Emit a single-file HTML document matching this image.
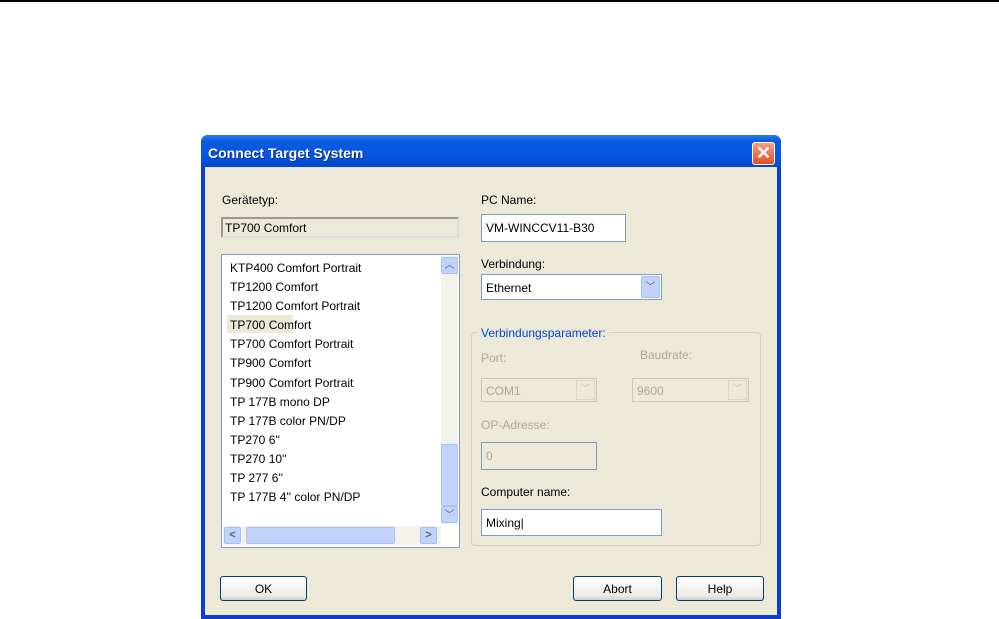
<!DOCTYPE html>
<html><head><meta charset="utf-8"><style>
body{margin:0;width:999px;height:619px;background:#fff;position:relative;overflow:hidden;font-family:"Liberation Sans",sans-serif;font-size:12px;color:#000}
.a{position:absolute}
.dlg{left:201px;top:135px;width:580px;height:484px;background:#0a3fd0;border-radius:7px 7px 0 0}
.title{left:201px;top:135px;width:580px;height:32px;border-radius:7px 7px 0 0;background:linear-gradient(#2b78f0,#0a5ae0 20%,#0555e0 70%,#0447c8)}
.tt{left:208px;top:145px;color:#fff;font-weight:bold;font-size:14px;text-shadow:1px 1px #0a2a80}
.body{left:205px;top:167px;width:572px;height:448px;background:#ece9d8}
.in{background:#fff;border:1px solid #7f9db9;box-sizing:border-box;padding:3px 0 0 4px}
.btn{border:1px solid #003c74;border-radius:3px;background:linear-gradient(#fff,#ecebe6 80%,#d6d0c5);box-sizing:border-box;text-align:center;padding-top:5px}
.sb{background:#c1d3fb;border:1px solid #a9c0ef;border-radius:2px;box-sizing:border-box}
.dis{color:#aca899}
</style></head><body>
<div class="a" style="left:0;top:0;width:999px;height:2px;background:#000"></div>
<div class="a dlg"></div>
<div class="a title"></div>
<div class="a tt">Connect Target System</div>
<div class="a" style="left:752px;top:142px;width:23px;height:23px;border:1px solid #fff;border-radius:3px;background:linear-gradient(#f0a080,#e0502a);box-sizing:border-box;color:#fff;font-size:18px;text-align:center;line-height:20px;font-weight:bold">✕</div>
<div class="a body"></div>

<div class="a" style="left:222px;top:193px">Gerätetyp:</div>
<div class="a" style="left:221px;top:217px;width:238px;height:21px;border:2px solid #9a9890;border-right-color:#ddd;border-bottom-color:#ddd;box-sizing:border-box;padding:2px 0 0 2px">TP700 Comfort</div>

<div class="a" style="left:221px;top:254px;width:239px;height:294px;background:#fff;border:1px solid #7f9db9;box-sizing:border-box"></div>
<div class="a" style="left:227px;top:315px;width:66px;height:18px;background:#ece9d8"></div>
<div class="a" style="left:230px;top:259px;line-height:19.1px">KTP400 Comfort Portrait<br>TP1200 Comfort<br>TP1200 Comfort Portrait<br>TP700 Comfort<br>TP700 Comfort Portrait<br>TP900 Comfort<br>TP900 Comfort Portrait<br>TP 177B mono DP<br>TP 177B color PN/DP<br>TP270 6''<br>TP270 10''<br>TP 277 6''<br>TP 177B 4'' color PN/DP</div>
<div class="a" style="left:441px;top:256px;width:17px;height:268px;background:#f3f1ec"></div>
<div class="a sb" style="left:441px;top:257px;width:17px;height:17px;color:#4d6185;font-size:10px;text-align:center;line-height:15px">︿</div>
<div class="a sb" style="left:441px;top:444px;width:17px;height:62px"></div>
<div class="a sb" style="left:441px;top:506px;width:17px;height:17px;color:#4d6185;font-size:10px;text-align:center;line-height:17px">﹀</div>
<div class="a" style="left:223px;top:526px;width:218px;height:19px;background:#f3f1ec"></div>
<div class="a sb" style="left:224px;top:527px;width:17px;height:17px;color:#4d6185;font-size:11px;text-align:center;line-height:15px;font-weight:bold">&lt;</div>
<div class="a sb" style="left:246px;top:527px;width:149px;height:17px"></div>
<div class="a sb" style="left:420px;top:527px;width:17px;height:17px;color:#4d6185;font-size:11px;text-align:center;line-height:15px;font-weight:bold">&gt;</div>

<div class="a" style="left:481px;top:193px">PC Name:</div>
<div class="a in" style="left:481px;top:214px;width:145px;height:28px;padding-top:6px">VM-WINCCV11-B30</div>
<div class="a" style="left:481px;top:257px">Verbindung:</div>
<div class="a in" style="left:481px;top:274px;width:181px;height:26px;padding-top:6px">Ethernet</div>
<div class="a sb" style="left:641px;top:276px;width:19px;height:22px;color:#4d6185;text-align:center;line-height:22px;font-size:10px">﹀</div>

<div class="a" style="left:471px;top:332px;width:290px;height:214px;border:1px solid #d0d0bf;border-radius:4px;box-sizing:border-box"></div>
<div class="a" style="left:478px;top:326px;background:#ece9d8;color:#0046d5;padding:0 3px">Verbindungsparameter:</div>
<div class="a dis" style="left:481px;top:351px">Port:</div>
<div class="a dis" style="left:640px;top:348px">Baudrate:</div>
<div class="a dis" style="left:481px;top:378px;width:116px;height:24px;border:1px solid #c9c7ba;box-sizing:border-box;padding:5px 0 0 4px">COM1</div>
<div class="a" style="left:576px;top:380px;width:19px;height:20px;border:1px solid #d8d6cc;box-sizing:border-box;color:#c9c7ba;text-align:center;font-size:10px;line-height:18px">﹀</div>
<div class="a dis" style="left:632px;top:378px;width:117px;height:24px;border:1px solid #c9c7ba;box-sizing:border-box;padding:5px 0 0 4px">9600</div>
<div class="a" style="left:728px;top:380px;width:19px;height:20px;border:1px solid #d8d6cc;box-sizing:border-box;color:#c9c7ba;text-align:center;font-size:10px;line-height:18px">﹀</div>
<div class="a dis" style="left:481px;top:418px">OP-Adresse:</div>
<div class="a dis" style="left:481px;top:442px;width:116px;height:28px;border:1px solid #7f9db9;box-sizing:border-box;padding:6px 0 0 4px">0</div>
<div class="a" style="left:481px;top:485px">Computer name:</div>
<div class="a in" style="left:481px;top:509px;width:181px;height:27px;padding-top:6px">Mixing|</div>

<div class="a btn" style="left:220px;top:576px;width:87px;height:25px">OK</div>
<div class="a btn" style="left:573px;top:576px;width:89px;height:25px">Abort</div>
<div class="a btn" style="left:676px;top:576px;width:88px;height:25px">Help</div>
</body></html>
